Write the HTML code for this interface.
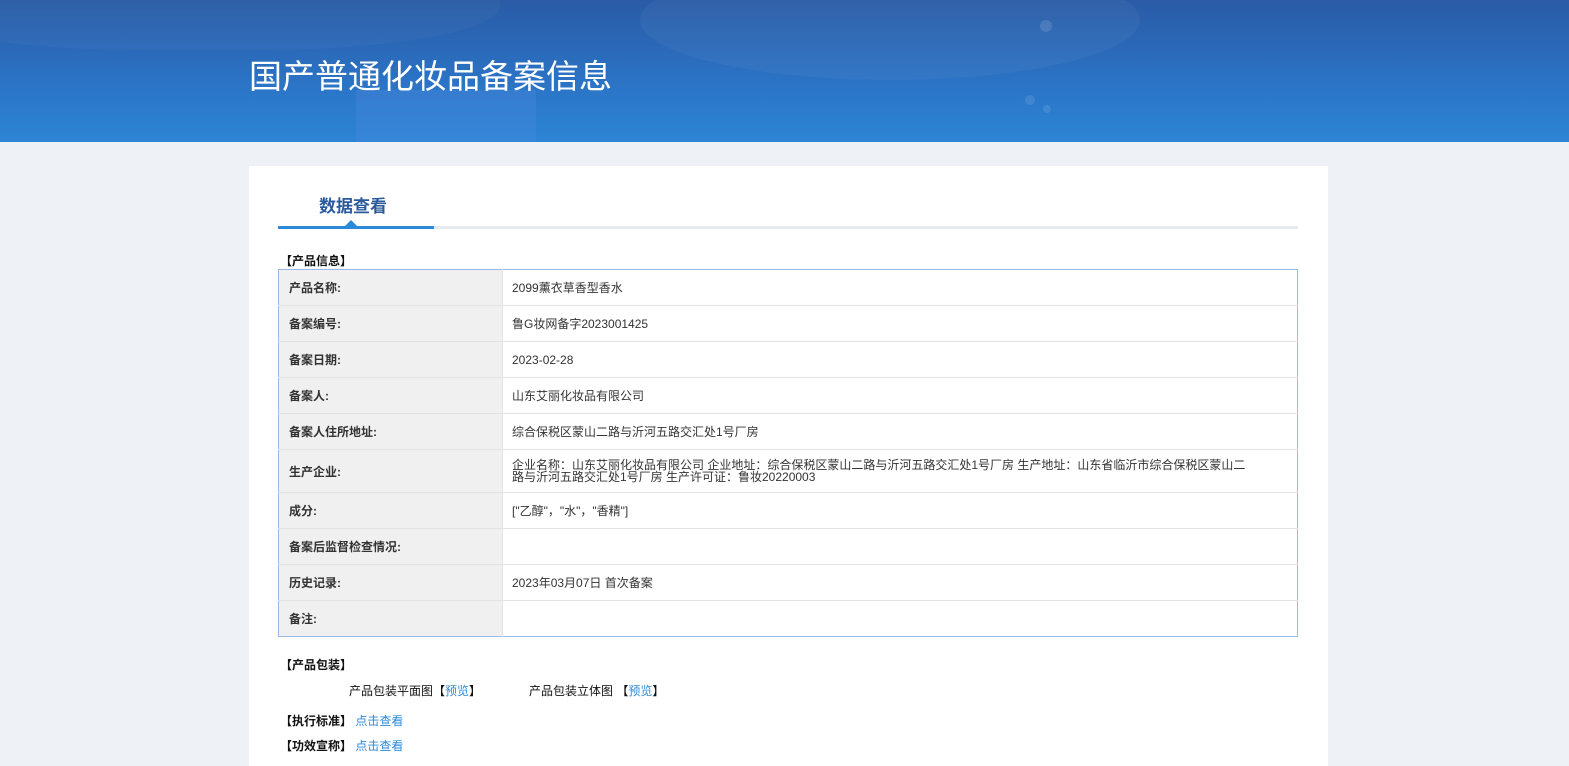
<!DOCTYPE html>
<html><head><meta charset="utf-8"><style>
*{margin:0;padding:0;box-sizing:border-box}
body{width:1569px;height:757px;overflow:hidden;background:#eef2f6;font-family:"Liberation Sans","Noto Sans CJK SC",sans-serif;font-size:12px;color:#333}
.hd{position:absolute;left:0;top:0;width:1569px;height:142px;background:linear-gradient(180deg,#2a5ba6 0%,#2b74c6 60%,#2c85d4 100%);overflow:hidden}
.hd h1{position:absolute;left:249px;top:55px;font-size:33px;font-weight:normal;color:#fff;line-height:44px}
.blob{position:absolute;border-radius:50%;background:rgba(255,255,255,.04)}
.panel{position:absolute;left:249px;top:166px;width:1079px;height:600px;background:#fff}
.tab{position:absolute;left:70px;top:26px;font-size:17px;font-weight:bold;color:#2a5a9c}
.line{position:absolute;left:29px;top:60px;width:1020px;height:3px;background:#e6e9ee}
.line b{position:absolute;left:0;top:0;width:156px;height:3px;background:#2c8ad8}
.tri{position:absolute;left:96px;top:54px;width:0;height:0;border-left:6px solid transparent;border-right:6px solid transparent;border-bottom:6px solid #2c8ad8}
.sec{position:absolute;font-weight:bold;color:#111;font-size:12px}
table{position:absolute;left:29px;top:103px;width:1020px;border-collapse:collapse;border:1px solid #9ab9e8}
td{border-bottom:1px solid #e2e2e2;height:36px;padding:0 10px;vertical-align:middle;font-size:12px;color:#333}
td.l{width:224px;background:#f0f0f0;font-weight:bold;color:#333;border-right:1px solid #e2e2e2}
td.v{padding-left:9px;line-height:12px}
a{color:#2c8ad8;text-decoration:none}
</style></head><body>
<div class="hd">
<div class="blob" style="left:640px;top:-40px;width:500px;height:120px;background:rgba(255,255,255,.04)"></div>
<div class="blob" style="left:-100px;top:-60px;width:600px;height:110px;border-radius:40%;background:rgba(255,255,255,.03)"></div>
<div style="position:absolute;left:356px;top:90px;width:180px;height:60px;background:rgba(80,140,230,.3)"></div>
<div class="blob" style="left:1040px;top:20px;width:12px;height:12px;background:rgba(255,255,255,.12)"></div>
<div class="blob" style="left:1025px;top:95px;width:10px;height:10px;background:rgba(255,255,255,.1)"></div>
<div class="blob" style="left:1043px;top:105px;width:8px;height:8px;background:rgba(255,255,255,.1)"></div>
<h1>国产普通化妆品备案信息</h1>
</div>
<div class="panel">
<div class="tab">数据查看</div>
<div class="line"><b></b></div>
<div class="tri"></div>
<div class="sec" style="left:31px;top:86px">【产品信息】</div>
<table>
<tr><td class="l">产品名称:</td><td class="v">2099薰衣草香型香水</td></tr>
<tr><td class="l">备案编号:</td><td class="v">鲁G妆网备字2023001425</td></tr>
<tr><td class="l">备案日期:</td><td class="v">2023-02-28</td></tr>
<tr><td class="l">备案人:</td><td class="v">山东艾丽化妆品有限公司</td></tr>
<tr><td class="l">备案人住所地址:</td><td class="v">综合保税区蒙山二路与沂河五路交汇处1号厂房</td></tr>
<tr><td class="l" style="height:43px">生产企业:</td><td class="v">企业名称：山东艾丽化妆品有限公司 企业地址：综合保税区蒙山二路与沂河五路交汇处1号厂房 生产地址：山东省临沂市综合保税区蒙山二<br>路与沂河五路交汇处1号厂房 生产许可证：鲁妆20220003</td></tr>
<tr><td class="l">成分:</td><td class="v">["乙醇"，"水"，"香精"]</td></tr>
<tr><td class="l">备案后监督检查情况:</td><td class="v"></td></tr>
<tr><td class="l">历史记录:</td><td class="v">2023年03月07日 首次备案</td></tr>
<tr><td class="l" style="border-bottom:none">备注:</td><td class="v" style="border-bottom:none"></td></tr>
</table>
<div class="sec" style="left:31px;top:490px">【产品包装】</div>
<div style="position:absolute;left:100px;top:516px;color:#111">产品包装平面图【<a>预览</a>】</div>
<div style="position:absolute;left:280px;top:516px;color:#111">产品包装立体图 【<a>预览</a>】</div>
<div class="sec" style="left:31px;top:546px">【执行标准】 <a style="font-weight:normal">点击查看</a></div>
<div class="sec" style="left:31px;top:571px">【功效宣称】 <a style="font-weight:normal">点击查看</a></div>
</div>
</body></html>
